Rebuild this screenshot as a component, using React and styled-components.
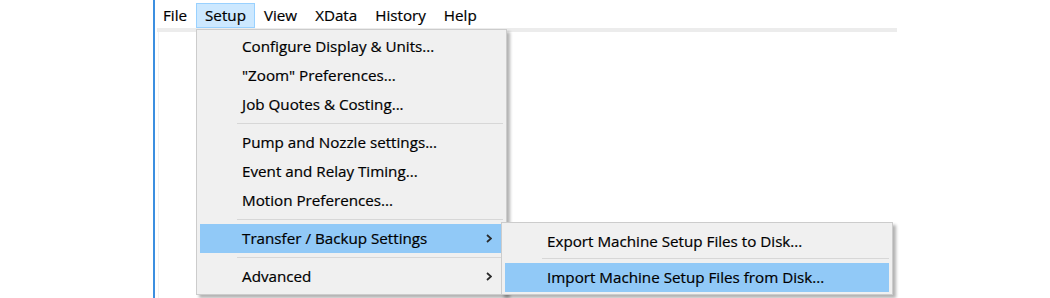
import React from 'react'
import styled, { createGlobalStyle } from 'styled-components'

const GlobalStyle = createGlobalStyle`
    body {
        margin: 0;
        background: #fff;
        font-family: 'Open Sans', 'Noto Sans', sans-serif;
        -webkit-text-stroke: 0.2px #000;
    }
`;

function Chevron() {
    return (
        <ArrowIcon width="6" height="9" viewBox="0 0 6 9">
            <polyline points="1,1 5,4.5 1,8" fill="none" stroke="#2a2a2a" strokeWidth="1.8" />
        </ArrowIcon>
    )
}

function App() {
    return (
        <Page>
            <GlobalStyle />
            <Window>
                <MenuBar>
                    <BarItem>File</BarItem>
                    <BarItem $open>
                        Setup
                        <Dropdown>
                            <Row>Configure Display &amp; Units...</Row>
                            <Row>"Zoom" Preferences...</Row>
                            <Row>Job Quotes &amp; Costing...</Row>
                            <Separator />
                            <Row>Pump and Nozzle settings...</Row>
                            <Row>Event and Relay Timing...</Row>
                            <Row>Motion Preferences...</Row>
                            <Separator />
                            <Row $active>
                                Transfer / Backup Settings
                                <Chevron />
                                <SubMenu>
                                    <Row>Export Machine Setup Files to Disk...</Row>
                                    <SubSeparator />
                                    <Row $active>Import Machine Setup Files from Disk...</Row>
                                </SubMenu>
                            </Row>
                            <Separator />
                            <Row>
                                Advanced
                                <Chevron />
                            </Row>
                        </Dropdown>
                    </BarItem>
                    <BarItem>View</BarItem>
                    <BarItem>XData</BarItem>
                    <BarItem>History</BarItem>
                    <BarItem>Help</BarItem>
                </MenuBar>
                <Band />
                <Content />
            </Window>
        </Page>
    )
}

const Page = styled.div`
    height: 298px;
    padding-left: 153px;
    display: flex;
    overflow: hidden;
`;
const Window = styled.div`
    width: 742px;
    border-left: 2px solid #3c8fe0;
    display: flex;
    flex-direction: column;
`;
const MenuBar = styled.div`
    display: flex;
    height: 28px;
    margin-left: -1px;
    font-size: 15.2px;
    color: #000;
`;
const BarItem = styled.div`
    position: relative;
    margin-top: 3px;
    height: 25px;
    box-sizing: border-box;
    padding: 0 8px;
    line-height: 23px;
    border: 1px solid ${p => (p.$open ? '#99d1ff' : 'transparent')};
    background: ${p => (p.$open ? '#cce8ff' : 'transparent')};
    white-space: nowrap;
`;
const Band = styled.div`
    height: 4px;
    margin-left: 2px;
    background: #ececec;
`;
const Content = styled.div`
    flex: 1;
    margin-left: 3px;
    border-left: 1px solid #f2f2f2;
`;
const Dropdown = styled.div`
    position: absolute;
    top: 25px;
    left: -1px;
    z-index: 10;
    width: 311px;
    box-sizing: border-box;
    padding: 2px 3px 3px;
    background: #f0f0f0;
    border: 1px solid #cccccc;
    box-shadow: 3px 3px 3px rgba(0, 0, 0, 0.3);
`;
const Row = styled.div`
    position: relative;
    display: flex;
    align-items: center;
    height: 29px;
    padding-left: 42px;
    background: ${p => (p.$active ? '#91c9f7' : 'transparent')};
    white-space: nowrap;
`;
const ArrowIcon = styled.svg`
    margin-left: auto;
    margin-right: 11px;
`;
const Separator = styled.div`
    height: 1px;
    margin: 4px 0 4px 37px;
    background: #d7d7d7;
`;
const SubMenu = styled.div`
    position: absolute;
    top: -2px;
    left: 301px;
    width: 392px;
    box-sizing: border-box;
    padding: 4px 3px 2px;
    background: #f0f0f0;
    border: 1px solid #cccccc;
    box-shadow: 3px 3px 3px rgba(0, 0, 0, 0.3);
`;
const SubSeparator = styled(Separator)`
    margin: 2px 0 4px 37px;
`;

export default App
